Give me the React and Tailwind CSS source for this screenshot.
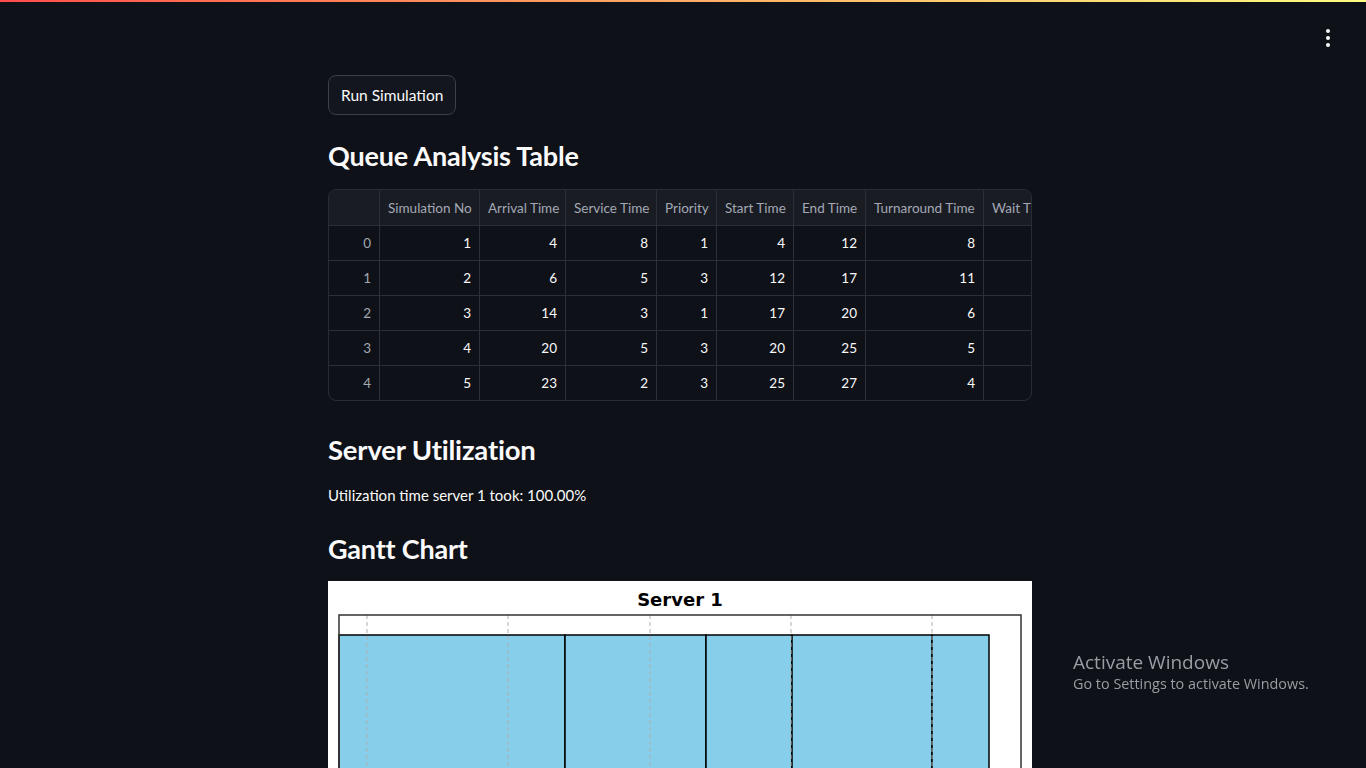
import React from "react";

const cols = [
  { name: "", w: 51 },
  { name: "Simulation No", w: 100 },
  { name: "Arrival Time", w: 86 },
  { name: "Service Time", w: 91 },
  { name: "Priority", w: 60 },
  { name: "Start Time", w: 77 },
  { name: "End Time", w: 72 },
  { name: "Turnaround Time", w: 118 },
  { name: "Wait Time", w: 100 },
];

const rows = [
  [0, 1, 4, 8, 1, 4, 12, 8, 0],
  [1, 2, 6, 5, 3, 12, 17, 11, 6],
  [2, 3, 14, 3, 1, 17, 20, 6, 3],
  [3, 4, 20, 5, 3, 20, 25, 5, 0],
  [4, 5, 23, 2, 3, 25, 27, 4, 2],
];

function Chart() {
  const edges = [11, 237, 378, 464, 604, 661];
  const grid = [39, 180, 322, 463, 604];
  return (
    <svg width="704" height="420" viewBox="0 0 704 420" className="block">
      <rect x="0" y="0" width="704" height="420" fill="#ffffff" />
      <text x="352" y="25" textAnchor="middle" fontFamily="DejaVu Sans, sans-serif" fontWeight="bold" fontSize="18" fill="#000">Server 1</text>
      {edges.slice(0, -1).map((x, i) => (
        <rect key={i} x={x} y="54" width={edges[i + 1] - x} height="330" fill="#87ceeb" stroke="#000" strokeWidth="1.5" />
      ))}
      {grid.map((x) => (
        <line key={x} x1={x} y1="34" x2={x} y2="400" stroke="#b0b0b0" strokeWidth="1" strokeDasharray="4 3" />
      ))}
      <rect x="11" y="34" width="682" height="366" fill="none" stroke="#333" strokeWidth="1.5" />
    </svg>
  );
}

export default function App() {
  const font = { fontFamily: "Lato, 'Noto Sans', sans-serif" };
  return (
    <div className="min-h-screen bg-[#0e1117] text-[#fafafa] relative" style={font}>
      <div className="fixed top-0 left-0 right-0 h-[2px] bg-gradient-to-r from-[#ff4b4b] to-[#fffd80] z-10" />
      <div className="fixed top-[29px] right-[36px] flex flex-col gap-[3px] items-center">
        <span className="w-[4px] h-[4px] rounded-full bg-[#fafafa]" />
        <span className="w-[4px] h-[4px] rounded-full bg-[#fafafa]" />
        <span className="w-[4px] h-[4px] rounded-full bg-[#fafafa]" />
      </div>
      <div className="pl-[328px] pt-[75px] w-[1032px]">
        <div className="w-[704px] flex flex-col">
          <button className="self-start h-[40px] px-[12px] pt-[2px] rounded-[8px] border border-[#3d4049] bg-[#13161e] text-[15.5px] text-[#fafafa]">
            Run Simulation
          </button>
          <h3 className="mt-[24px] h-[34px] leading-[34px] text-[27px] font-bold tracking-[-0.2px]">Queue Analysis Table</h3>
          <div className="mt-[16px] w-[704px] rounded-[8px] border border-[#2a2c33] overflow-hidden">
            <div className="flex bg-[#1a1c24] h-[36px] border-b border-[#2d2f36] whitespace-nowrap">
              {cols.map((c, i) => (
                <div
                  key={i}
                  style={{ width: c.w }}
                  className="shrink-0 px-[8px] pt-[1px] flex items-center text-[13.5px] text-[#a3a8b4] border-r border-[#2d2f36] overflow-hidden"
                >
                  {c.name}
                </div>
              ))}
            </div>
            {rows.map((r, ri) => (
              <div key={ri} className={"flex whitespace-nowrap " + (ri < rows.length - 1 ? "h-[35px] border-b border-[#2d2f36]" : "h-[34px]")}>
                {r.map((v, ci) => (
                  <div
                    key={ci}
                    style={{ width: cols[ci].w }}
                    className={
                      "shrink-0 px-[8px] pt-[1px] flex items-center justify-end text-[13.5px] border-r border-[#2d2f36] " +
                      (ci === 0 ? "text-[#a3a8b4]" : "text-[#fafafa]")
                    }
                  >
                    {v}
                  </div>
                ))}
              </div>
            ))}
          </div>
          <h3 className="mt-[32px] h-[34px] leading-[34px] text-[27.5px] font-bold tracking-[-0.2px]">Server Utilization</h3>
          <p className="mt-[16px] h-[24px] leading-[24px] text-[15px]">Utilization time server 1 took: 100.00%</p>
          <h3 className="mt-[25px] h-[34px] leading-[34px] text-[27px] font-bold tracking-[-0.2px]">Gantt Chart</h3>
          <div className="mt-[15px]">
            <Chart />
          </div>
        </div>
      </div>
      <div className="fixed left-[1073px] top-[650px] text-[#9a9da3]" style={{ fontFamily: "'Open Sans', 'Noto Sans', sans-serif" }}>
        <div className="text-[19px] leading-[24px]">Activate Windows</div>
        <div className="text-[14.4px] leading-[20px]">Go to Settings to activate Windows.</div>
      </div>
    </div>
  );
}
